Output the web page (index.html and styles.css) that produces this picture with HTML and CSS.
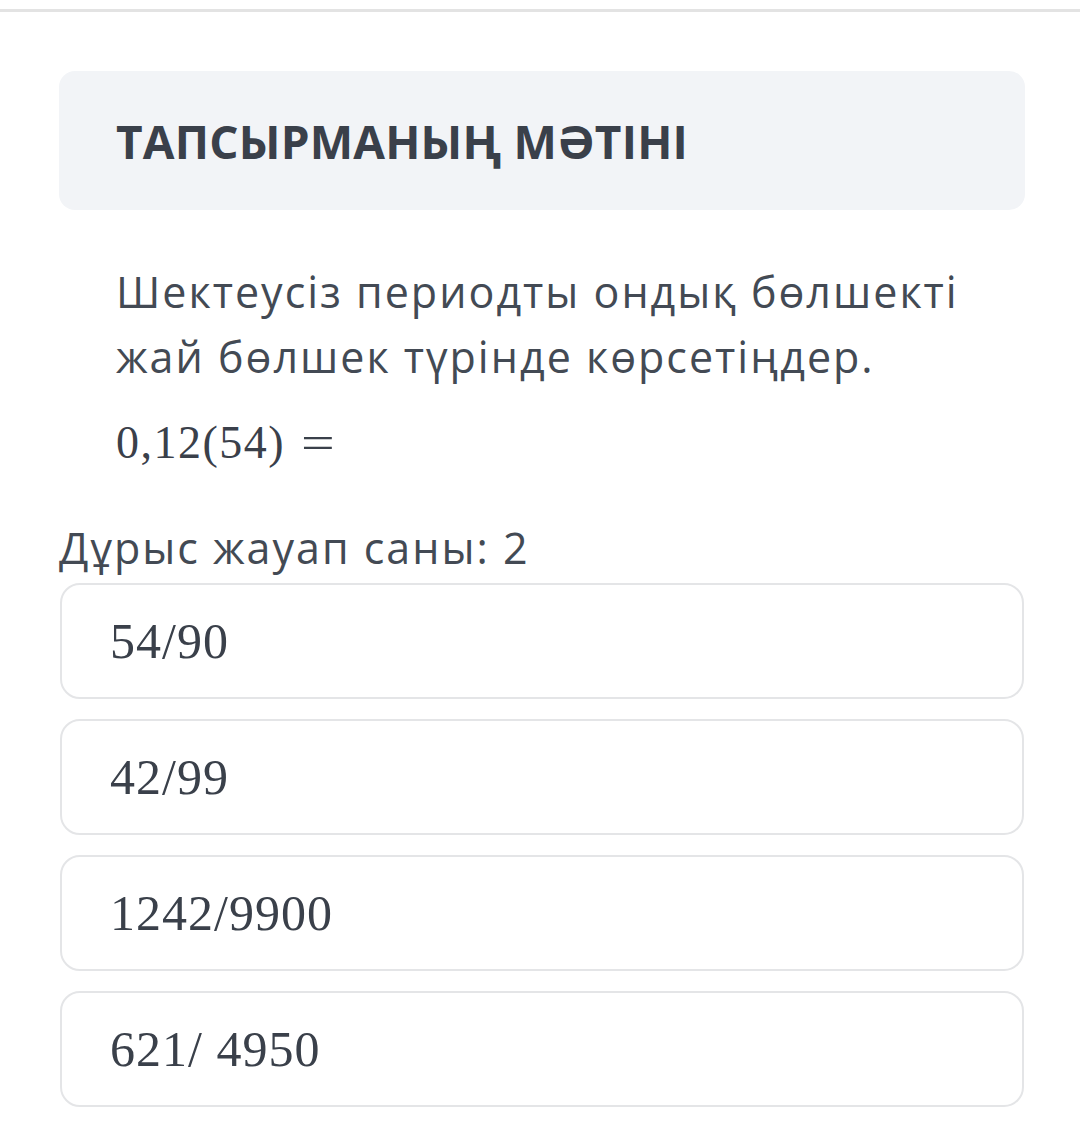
FILE: index.html
```html
<!DOCTYPE html>
<html lang="kk">
<head>
<meta charset="utf-8">
<title>Тапсырма</title>
<link rel="stylesheet" href="styles.css">
</head>
<body>
<div class="topline"></div>
<main class="page">
  <div class="task-head">
    <h1 class="task-title">ТАПСЫРМАНЫҢ МӘТІНІ</h1>
  </div>
  <div class="task-body">
    <p class="task-text">Шектеусіз периодты ондық бөлшекті жай бөлшек түрінде көрсетіңдер.</p>
    <p class="task-math">0,12(54)<span class="eq">=</span></p>
  </div>
  <div class="answers-count">Дұрыс жауап саны: 2</div>
  <ul class="options">
    <li class="option">54/90</li>
    <li class="option">42/99</li>
    <li class="option">1242/9900</li>
    <li class="option">621/ 4950</li>
  </ul>
</main>
</body>
</html>
```

FILE: styles.css
```css
html, body {
  margin: 0;
  padding: 0;
  background: #ffffff;
}
body {
  font-family: "Open Sans", "Noto Sans", sans-serif;
  color: #3c424c;
}
.topline {
  margin-top: 9px;
  height: 3px;
  background: #e3e3e3;
}
.page {
  padding: 59px 55px 0 59px;
}
.task-head {
  background: #f2f4f7;
  border-radius: 16px;
  height: 139px;
  display: flex;
  align-items: center;
  padding-left: 57px;
}
.task-title {
  margin: 0;
  font-size: 46px;
  font-weight: 700;
  color: #3a404a;
  line-height: 1;
  letter-spacing: 0.2px;
}
.task-body {
  padding: 0 40px 0 57px;
}
.task-text {
  margin: 0;
  padding-top: 49px;
  font-size: 43px;
  letter-spacing: 2px;
  line-height: 65px;
  color: #434a54;
}
.task-math {
  margin: 0;
  padding-top: 24px;
  font-family: "Liberation Serif", "Times New Roman", serif;
  font-size: 46px;
  letter-spacing: 1.5px;
  line-height: 60px;
  color: #3a404a;
}
.task-math .eq {
  display: inline-block;
  margin-left: 16px;
  transform: scaleX(1.3);
  transform-origin: left center;
}
.answers-count {
  margin-top: 50px;
  font-size: 43px;
  letter-spacing: 2px;
  line-height: 50px;
  color: #434a54;
}
.options {
  list-style: none;
  margin: 10px 0 0 0;
  padding: 0 1px;
  display: flex;
  flex-direction: column;
  gap: 20px;
}
.option {
  height: 116px;
  box-sizing: border-box;
  border: 2px solid #e4e5e7;
  border-radius: 20px;
  padding-left: 48px;
  display: flex;
  align-items: center;
  font-family: "Liberation Serif", "Times New Roman", serif;
  font-size: 50px;
  letter-spacing: 1px;
  color: #3a404a;
}
```
